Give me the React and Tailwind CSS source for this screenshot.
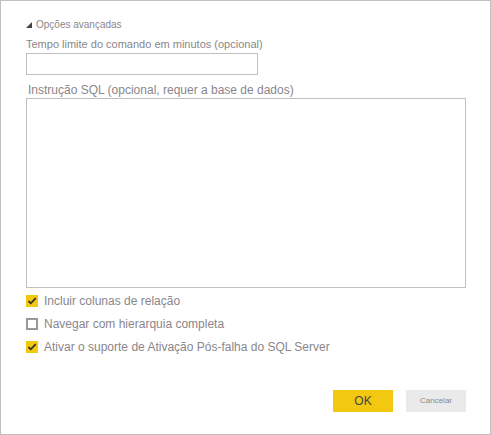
import { useState } from "react";

const OPTIONS = [
  { id: "relations", label: "Incluir colunas de relação", checked: true },
  { id: "hierarchy", label: "Navegar com hierarquia completa", checked: false },
  { id: "failover", label: "Ativar o suporte de Ativação Pós-falha do SQL Server", checked: true },
];

function Option({ id, label, checked }) {
  const [on, setOn] = useState(checked);
  return (
    <div className="flex h-4 items-center gap-[6px]">
      <span className="grid size-3 shrink-0">
        <input
          id={id}
          type="checkbox"
          checked={on}
          onChange={(e) => setOn(e.target.checked)}
          className="col-start-1 row-start-1 size-3 appearance-none border-2 border-[#999999] bg-white checked:border-0 checked:bg-[#f2c811]"
        />
        {on && (
          <svg viewBox="0 0 12 12" className="pointer-events-none col-start-1 row-start-1 size-3" aria-hidden="true">
            <path d="M2.4 6 4.8 8.3 9.8 3.2" fill="none" stroke="#333333" strokeWidth="1.8" />
          </svg>
        )}
      </span>
      <label htmlFor={id} className="text-[12px] leading-4">
        {label}
      </label>
    </div>
  );
}

export default function App() {
  const [open, setOpen] = useState(true);
  return (
    <form
      onSubmit={(e) => e.preventDefault()}
      className="flex min-h-screen flex-col border border-[#c0c0c0] bg-white pt-4 pr-6 pb-[22px] pl-[25px] font-['Liberation_Sans',Arial,sans-serif] text-[#8a868c]"
    >
      <button
        type="button"
        aria-expanded={open}
        onClick={() => setOpen(!open)}
        className="flex items-center gap-1 self-start text-[10px] leading-4"
      >
        <svg viewBox="0 0 6 6" className="size-[6px]" aria-hidden="true">
          <path d="M6 0V6H0Z" fill="#444444" />
        </svg>
        Opções avançadas
      </button>
      {open && (
        <div className="flex flex-col">
          <label htmlFor="timeout" className="mt-[3px] mb-px text-[11px] leading-4">
            Tempo limite do comando em minutos (opcional)
          </label>
          <input id="timeout" type="text" className="h-[22px] w-[232px] border border-[#c0c0c0] px-1 text-[12px] outline-none" />
          <label htmlFor="sql" className="mt-[7px] pl-[2px] text-[12px] leading-4">
            Instrução SQL (opcional, requer a base de dados)
          </label>
          <textarea id="sql" className="h-[190px] w-full resize-none border border-[#c0c0c0] p-1 text-[12px] outline-none" />
          <div className="mt-[5px] flex flex-col gap-[7px]">
            {OPTIONS.map((o) => (
              <Option key={o.id} {...o} />
            ))}
          </div>
        </div>
      )}
      <div className="mt-auto flex justify-end gap-[13px]">
        <button type="submit" className="h-[22px] w-[60px] bg-[#f2c811] text-[12px] leading-4 text-[#444444]">
          OK
        </button>
        <button type="button" className="h-[22px] w-[60px] bg-[#eaeaea] text-[8px] leading-4">
          Cancelar
        </button>
      </div>
    </form>
  );
}
